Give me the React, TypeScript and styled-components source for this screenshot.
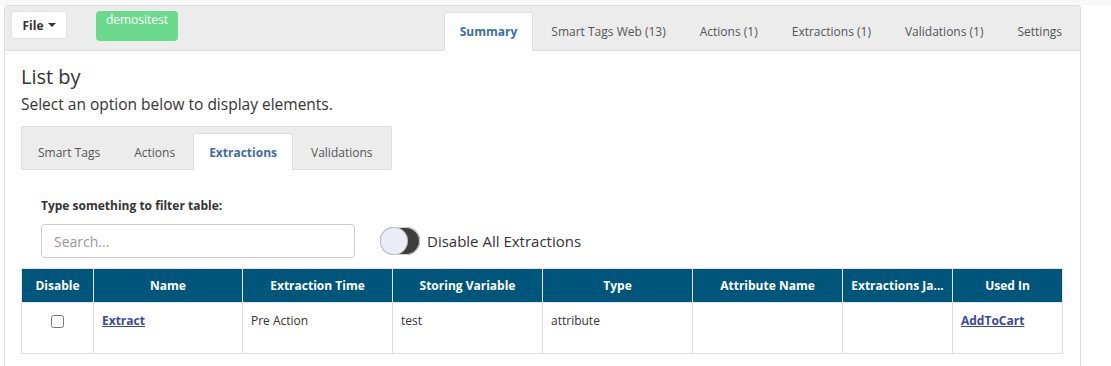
import React, { useState } from 'react';
import styled, { createGlobalStyle } from 'styled-components';

const GlobalStyle = createGlobalStyle`
  body {
    margin: 0;
    background: #ffffff;
    font-family: 'Open Sans', 'Liberation Sans', Arial, sans-serif;
    color: #333333;
  }
`;

const topTabs = ['Summary', 'Smart Tags Web (13)', 'Actions (1)', 'Extractions (1)', 'Validations (1)', 'Settings'];
const listTabs = ['Smart Tags', 'Actions', 'Extractions', 'Validations'];

const columns = [
  { label: 'Disable', width: 72 },
  { label: 'Name', width: 149 },
  { label: 'Extraction Time', width: 150 },
  { label: 'Storing Variable', width: 150 },
  { label: 'Type', width: 150 },
  { label: 'Attribute Name', width: 150 },
  { label: 'Extractions Ja...', width: 110 },
  { label: 'Used In', width: 110 },
];

const App: React.FC = () => {
  const [disableAll, setDisableAll] = useState(false);

  return (
    <>
      <GlobalStyle />
      <TopStrip />
      <Panel>
        <Header>
          <FileButton>
            File <Caret />
          </FileButton>
          <Badge>demositest</Badge>
          <TabList>
            {topTabs.map((t, i) => (
              <HeaderTab key={t} active={i === 0}>
                {t}
              </HeaderTab>
            ))}
          </TabList>
        </Header>

        <Content>
          <Title>List by</Title>
          <Subtitle>Select an option below to display elements.</Subtitle>

          <ListTabBar>
            {listTabs.map((t) => (
              <ListTab key={t} active={t === 'Extractions'}>
                {t}
              </ListTab>
            ))}
          </ListTabBar>

          <FilterSection>
            <FilterLabel>Type something to filter table:</FilterLabel>
            <FilterRow>
              <SearchInput placeholder="Search..." />
              <ToggleWrap onClick={() => setDisableAll(!disableAll)}>
                <Toggle on={disableAll}>
                  <Knob on={disableAll} />
                </Toggle>
                <ToggleLabel>Disable All Extractions</ToggleLabel>
              </ToggleWrap>
            </FilterRow>
          </FilterSection>

          <Table>
            <colgroup>
              {columns.map((c) => (
                <col key={c.label} style={{ width: c.width }} />
              ))}
            </colgroup>
            <thead>
              <tr>
                {columns.map((c) => (
                  <Th key={c.label}>{c.label}</Th>
                ))}
              </tr>
            </thead>
            <tbody>
              <tr>
                <Td center>
                  <Checkbox type="checkbox" />
                </Td>
                <Td>
                  <Link href="#">Extract</Link>
                </Td>
                <Td>Pre Action</Td>
                <Td>test</Td>
                <Td>attribute</Td>
                <Td />
                <Td />
                <Td>
                  <Link href="#">AddToCart</Link>
                </Td>
              </tr>
            </tbody>
          </Table>
        </Content>
      </Panel>
    </>
  );
};

export default App;

const TopStrip = styled.div`
  height: 5px;
  background: #f8f8f8;
`;

const Panel = styled.div`
  margin-left: 4px;
  width: 1077px;
  min-height: 361px;
  border: 1px solid #dddddd;
  border-bottom: none;
  border-radius: 4px 4px 0 0;
  box-sizing: border-box;
`;

const Header = styled.div`
  display: flex;
  align-items: flex-start;
  height: 45px;
  padding: 5px 0 0 6px;
  box-sizing: border-box;
  background: #ececec;
  border-bottom: 1px solid #dddddd;
  border-radius: 4px 4px 0 0;
`;

const FileButton = styled.button`
  display: flex;
  align-items: center;
  justify-content: center;
  gap: 4px;
  width: 56px;
  height: 28px;
  background: #ffffff;
  border: 1px solid #e2e2e2;
  border-radius: 2px;
  font-family: inherit;
  font-size: 12px;
  font-weight: 700;
  color: #333333;
  padding: 0;
`;

const Caret = styled.span`
  width: 0;
  height: 0;
  border-left: 4px solid transparent;
  border-right: 4px solid transparent;
  border-top: 4px solid #333333;
`;

const Badge = styled.div`
  margin-left: 29px;
  width: 82px;
  height: 30px;
  background: #6bda8d;
  border-radius: 4px;
  color: #ffffff;
  font-size: 12px;
  text-align: center;
  line-height: 18px;
`;

const TabList = styled.div`
  display: flex;
  margin-left: auto;
  align-self: flex-end;
  margin-bottom: -1px;
`;

const HeaderTab = styled.div<{ active?: boolean }>`
  height: 39px;
  padding: 0 15px;
  margin-right: 2px;
  display: flex;
  align-items: center;
  box-sizing: border-box;
  font-size: 12px;
  font-weight: ${({ active }) => (active ? 700 : 400)};
  color: ${({ active }) => (active ? '#3b6ea8' : '#555555')};
  background: ${({ active }) => (active ? '#ffffff' : 'transparent')};
  border: 1px solid ${({ active }) => (active ? '#dddddd' : 'transparent')};
  border-bottom-color: ${({ active }) => (active ? '#ffffff' : 'transparent')};
  border-radius: 3px 3px 0 0;
`;

const Content = styled.div`
  padding: 12px 0 0 16px;
`;

const Title = styled.h2`
  margin: 0;
  font-size: 20px;
  font-weight: 400;
  line-height: 28px;
  color: #333333;
`;

const Subtitle = styled.p`
  margin: 0;
  font-size: 15.5px;
  line-height: 26px;
  color: #333333;
`;

const ListTabBar = styled.div`
  display: inline-flex;
  margin-top: 9px;
  padding-top: 6px;
  background: #ececec;
  border: 1px solid #dddddd;
`;

const ListTab = styled.div<{ active?: boolean }>`
  height: 37px;
  padding: 0 15px;
  margin-right: 2px;
  display: flex;
  align-items: center;
  box-sizing: border-box;
  font-size: 12px;
  font-weight: ${({ active }) => (active ? 700 : 400)};
  color: ${({ active }) => (active ? '#3b6ea8' : '#555555')};
  background: ${({ active }) => (active ? '#ffffff' : 'transparent')};
  border: 1px solid ${({ active }) => (active ? '#dddddd' : 'transparent')};
  border-bottom: none;
  margin-bottom: -1px;
  border-radius: 3px 3px 0 0;
`;

const FilterSection = styled.div`
  padding: 28px 0 10px 20px;
`;

const FilterLabel = styled.div`
  font-size: 12px;
  font-weight: 700;
  color: #333333;
  line-height: 16px;
`;

const FilterRow = styled.div`
  display: flex;
  align-items: center;
  margin-top: 10px;
`;

const SearchInput = styled.input`
  width: 314px;
  height: 34px;
  box-sizing: border-box;
  border: 1px solid #cccccc;
  border-radius: 4px;
  padding: 0 12px;
  font-family: inherit;
  font-size: 14px;
  color: #555555;
  &::placeholder {
    color: #999999;
  }
`;

const ToggleWrap = styled.label`
  display: flex;
  align-items: center;
  gap: 7px;
  margin-left: 25px;
  cursor: pointer;
`;

const Toggle = styled.span<{ on: boolean }>`
  position: relative;
  display: block;
  width: 40px;
  height: 28px;
  border-radius: 14px;
  background: ${({ on }) => (on ? '#005677' : '#3d3d3d')};
  box-shadow: inset 0 0 0 1px #cfcfcf;
`;

const Knob = styled.span<{ on: boolean }>`
  position: absolute;
  top: 1px;
  left: ${({ on }) => (on ? '13px' : '1px')};
  width: 26px;
  height: 26px;
  border-radius: 50%;
  background: #ececf8;
  box-shadow: 0 0 0 1px #c4c4c4;
`;

const ToggleLabel = styled.span`
  font-size: 15px;
  color: #333333;
`;

const Table = styled.table`
  border-collapse: collapse;
  table-layout: fixed;
  width: 1041px;
`;

const Th = styled.th`
  height: 33px;
  padding: 0 6px;
  background: #00567a;
  color: #ffffff;
  font-size: 12px;
  font-weight: 700;
  text-align: center;
  border: 1px solid #e0e6ea;
  white-space: nowrap;
  overflow: hidden;
  text-overflow: ellipsis;
`;

const Td = styled.td<{ center?: boolean }>`
  height: 51px;
  padding: 8px 8px 0;
  box-sizing: border-box;
  vertical-align: top;
  font-size: 12px;
  line-height: 20px;
  color: #333333;
  text-align: ${({ center }) => (center ? 'center' : 'left')};
  border: 1px solid #dddddd;
`;

const Link = styled.a`
  color: #3a4a98;
  font-weight: 700;
  text-decoration: underline;
`;

const Checkbox = styled.input`
  width: 13px;
  height: 13px;
  margin: 4px 0 0;
`;
